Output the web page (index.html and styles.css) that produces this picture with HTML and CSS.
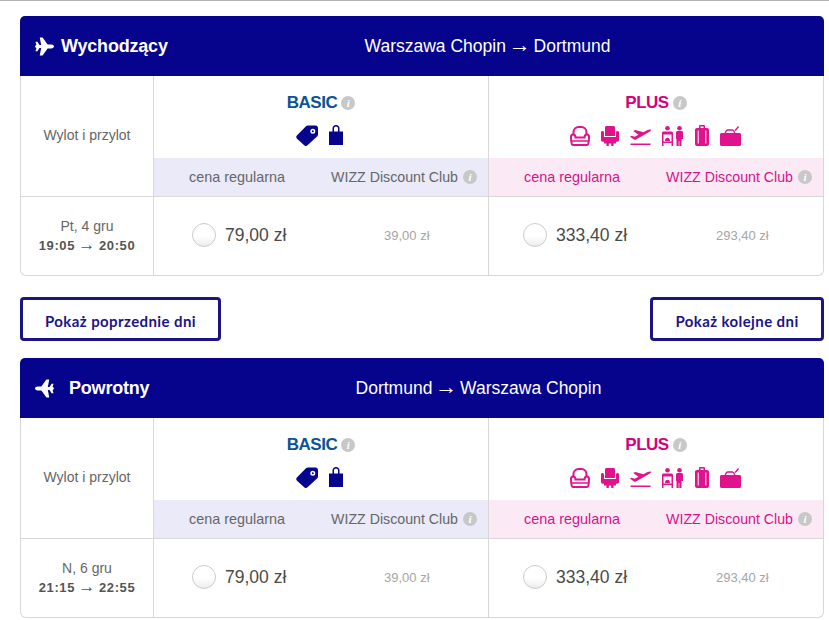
FILE: index.html
```html
<!DOCTYPE html>
<html lang="pl">
<head>
    <meta charset="UTF-8">
    <meta name="viewport" content="width=device-width, initial-scale=1.0">
    <title>Wybierz lot</title>
    <link rel="stylesheet" href="styles.css">
</head>
<body>

<svg class="sprites" width="0" height="0" aria-hidden="true">
    <symbol id="i-plane" viewBox="0 0 20 20">
        <path d="M1 8.300h5.500L5 .5h3L13.300 8h3.900c1.500 0 2.800.9 2.800 2s-1.300 2-2.800 2h-3.900L8 19.500H5l1.500-7.800H1l-1-1.700z"/>
        <path d="M.5 5h2l2.200 3.500H1.500zM.5 15h2l2.200-3.500H1.500z"/>
    </symbol>
    <symbol id="i-tag" viewBox="0 0 22 21">
        <path fill-rule="evenodd" d="M12 0.500h7.500c1.400 0 2.500 1.100 2.500 2.500v6.500c0 .7-.3 1.200-.7 1.700L11.500 20.300c-.8.900-2.100.9-3 .1L1 13.700c-1-.9-1-2.300-.1-3.200L10 1.300c.5-.5 1.200-.8 2-.8zM16.800 3.700a2.500 2.500 0 1 0 0 5 2.500 2.500 0 0 0 0-5zm0 1.500a1 1 0 1 1 0 2 1 1 0 0 1 0-2z"/>
    </symbol>
    <symbol id="i-bag" viewBox="0 0 14 20">
        <path fill-rule="evenodd" d="M3.500 6.500V3.300C3.500 1.300 5 0 7 0s3.500 1.300 3.500 3.300v3.200H14V20H0V6.500zM5 6.500h4V3.300C9 2.200 8.100 1.500 7 1.500s-2 .7-2 1.800z"/>
    </symbol>
    <symbol id="i-seat" viewBox="0 0 20 20">
        <path fill="none" stroke="currentColor" stroke-width="2" d="M3.500 8.500V6c0-3 2.500-5 5-5h3c2.500 0 5 2 5 5v2.500"/>
        <path fill="none" stroke="currentColor" stroke-width="2" d="M3 8.500c1.500 0 2.500 1 2.500 3h9c0-2 1-3 2.500-3 1.500 0 2 1.300 2 2.500 0 3-.3 5-.8 7-.2.700-.6 1-1.200 1H3c-.6 0-1-.3-1.200-1C1.300 16 1 14 1 11c0-1.200.5-2.500 2-2.500z"/>
        <path fill="none" stroke="currentColor" stroke-width="1.500" d="M2 15h16"/>
    </symbol>
    <symbol id="i-chair" viewBox="0 0 18 20">
        <path d="M4 1.500C4 .7 4.700 0 5.500 0h7c.8 0 1.500.7 1.500 1.500V10H4zM0 6.500C0 5.700.7 5 1.500 5S3 5.700 3 6.500V11h12V6.500c0-.8.700-1.500 1.500-1.500s1.500.7 1.500 1.500V14c0 1-.7 1.700-1.700 1.700H1.700C.7 15.700 0 15 0 14z"/>
        <path d="M3 15h12v2.500H12.500V20h-2.300v-2.500H7.800V20H5.500v-2.500H3z"/>
    </symbol>
    <symbol id="i-takeoff" viewBox="0 0 21 20">
        <path d="M0 10.500l1.500-.8 3.200 1 3.800-2L3.200 5l2.200-1 8 2.300L17.600 4c1.300-.6 2.800-.8 3.300-.3.400.5-.2 1.300-1.500 2L6 13.500c-.8.400-1.500.3-2.100 0z"/>
        <path d="M.5 17.500h20V19H.5z"/>
    </symbol>
    <symbol id="i-desk" viewBox="0 0 22 20">
        <circle cx="5.500" cy="2.300" r="2.300"/>
        <circle cx="17.500" cy="2.300" r="2.300"/>
        <path d="M1.500 5.500h8c.8 0 1.500.7 1.500 1.500v1.500H0V7c0-.8.7-1.500 1.500-1.500zM3 14.500c0-1.600 1-2.800 2.500-2.800S8 12.900 8 14.500v.5H3zM14 6.700c0-1 .7-1.700 1.700-1.700h3.600c1 0 1.700.7 1.700 1.700V13h-1.500v7h-2.200v-5h-.6v5h-2.200v-7H14z"/>
        <path d="M0 8h1.500v12H0zM1 15.500h10V17H1zM9.500 8H11v12H9.500z"/>
    </symbol>
    <symbol id="i-suitcase" viewBox="0 0 14 21">
        <path fill-rule="evenodd" d="M4 3V1.200C4 .5 4.500 0 5.200 0h3.600c.7 0 1.200.5 1.200 1.200V3h2c1.100 0 2 .9 2 2v14c0 1.100-.9 2-2 2H2c-1.100 0-2-.9-2-2V5c0-1.100.9-2 2-2zM5.500 3h3V1.500h-3zM2.700 5.500h1v13h-1zM10.300 5.500h1v13h-1z"/>
    </symbol>
    <symbol id="i-holdall" viewBox="0 0 21 20">
        <path d="M1.500 7h18c.8 0 1.500.7 1.500 1.500v10c0 .8-.7 1.500-1.500 1.500h-18C.7 20 0 19.300 0 18.500v-10C0 7.700.7 7 1.500 7z"/>
        <path fill="none" stroke="currentColor" stroke-width="1.300" d="M5 8.500c.5-3 1.500-4.500 3-4.500h4.500c1 0 1.500 1 2 2.500l.5 2"/>
        <path d="M14.500 4.200L18 0l1.100.9-3.500 4.200z"/>
    </symbol>
</svg>

<main class="page">
    <section class="flight">
        <header class="flight-head">
            <div class="flight-title">
                <svg class="plane-icon"><use href="#i-plane"/></svg>
                <span>Wychodzący</span>
            </div>
            <div class="flight-route">Warszawa Chopin <span class="arrow">→</span> Dortmund</div>
        </header>
        <div class="fare-grid">
            <div class="cell cell-label">Wylot i przylot</div>
            <div class="cell fare-head fare-basic">
                <div class="fare-name">BASIC <i class="info">i</i></div>
                <div class="fare-icons">
                    <svg class="ico-tag"><use href="#i-tag"/></svg>
                    <svg class="ico-bag"><use href="#i-bag"/></svg>
                </div>
                <div class="fare-prices">
                    <span class="regular">cena regularna</span>
                    <span class="club">WIZZ Discount Club <i class="info">i</i></span>
                </div>
            </div>
            <div class="cell fare-head fare-plus">
                <div class="fare-name">PLUS <i class="info">i</i></div>
                <div class="fare-icons">
                    <svg class="ico-seat"><use href="#i-seat"/></svg>
                    <svg class="ico-chair"><use href="#i-chair"/></svg>
                    <svg class="ico-takeoff"><use href="#i-takeoff"/></svg>
                    <svg class="ico-desk"><use href="#i-desk"/></svg>
                    <svg class="ico-suitcase"><use href="#i-suitcase"/></svg>
                    <svg class="ico-holdall"><use href="#i-holdall"/></svg>
                </div>
                <div class="fare-prices">
                    <span class="regular">cena regularna</span>
                    <span class="club">WIZZ Discount Club <i class="info">i</i></span>
                </div>
            </div>
            <div class="cell cell-time">
                <div>Pt, 4 gru</div>
                <strong>19:05 <span class="arrow">→</span> 20:50</strong>
            </div>
            <div class="cell cell-price cell-price-basic">
                <span class="radio"></span>
                <span class="price">79,00 zł</span>
                <span class="price-club">39,00 zł</span>
            </div>
            <div class="cell cell-price cell-price-plus">
                <span class="radio"></span>
                <span class="price">333,40 zł</span>
                <span class="price-club">293,40 zł</span>
            </div>
        </div>
    </section>

    <div class="day-nav">
        <button type="button" class="day-btn day-prev">Pokaż poprzednie dni</button>
        <button type="button" class="day-btn day-next">Pokaż kolejne dni</button>
    </div>

    <section class="flight">
        <header class="flight-head">
            <div class="flight-title">
                <svg class="plane-icon plane-back"><use href="#i-plane"/></svg>
                <span class="title-back">Powrotny</span>
            </div>
            <div class="flight-route route-back">Dortmund <span class="arrow">→</span> Warszawa Chopin</div>
        </header>
        <div class="fare-grid">
            <div class="cell cell-label">Wylot i przylot</div>
            <div class="cell fare-head fare-basic">
                <div class="fare-name">BASIC <i class="info">i</i></div>
                <div class="fare-icons">
                    <svg class="ico-tag"><use href="#i-tag"/></svg>
                    <svg class="ico-bag"><use href="#i-bag"/></svg>
                </div>
                <div class="fare-prices">
                    <span class="regular">cena regularna</span>
                    <span class="club">WIZZ Discount Club <i class="info">i</i></span>
                </div>
            </div>
            <div class="cell fare-head fare-plus">
                <div class="fare-name">PLUS <i class="info">i</i></div>
                <div class="fare-icons">
                    <svg class="ico-seat"><use href="#i-seat"/></svg>
                    <svg class="ico-chair"><use href="#i-chair"/></svg>
                    <svg class="ico-takeoff"><use href="#i-takeoff"/></svg>
                    <svg class="ico-desk"><use href="#i-desk"/></svg>
                    <svg class="ico-suitcase"><use href="#i-suitcase"/></svg>
                    <svg class="ico-holdall"><use href="#i-holdall"/></svg>
                </div>
                <div class="fare-prices">
                    <span class="regular">cena regularna</span>
                    <span class="club">WIZZ Discount Club <i class="info">i</i></span>
                </div>
            </div>
            <div class="cell cell-time">
                <div>N, 6 gru</div>
                <strong>21:15 <span class="arrow">→</span> 22:55</strong>
            </div>
            <div class="cell cell-price cell-price-basic">
                <span class="radio"></span>
                <span class="price">79,00 zł</span>
                <span class="price-club">39,00 zł</span>
            </div>
            <div class="cell cell-price cell-price-plus">
                <span class="radio"></span>
                <span class="price">333,40 zł</span>
                <span class="price-club">293,40 zł</span>
            </div>
        </div>
    </section>
</main>

</body>
</html>
```

FILE: styles.css
```css
html, body {
    height: 620px;
    overflow: hidden;
}
body {
    margin: 0;
    background-color: #fff;
    border-top: 1px solid #b4b4b4;
    font-family: "Liberation Sans", Arial, sans-serif;
    color: #666;
}
.sprites {
    position: absolute;
}
.page {
    width: 804px;
    margin-left: 20px;
    padding-top: 15px;
}
.flight-head {
    display: flex;
    align-items: center;
    height: 60px;
    background-color: #06038d;
    border-radius: 5px 5px 0 0;
    color: #fff;
}
.flight-title {
    display: flex;
    align-items: center;
    width: 134px;
    padding-left: 15px;
    box-sizing: border-box;
    font-size: 18px;
    font-weight: bold;
    letter-spacing: -.2px;
    white-space: nowrap;
}
.plane-icon {
    width: 19px;
    height: 19px;
    margin-right: 7px;
    fill: #fff;
    flex: none;
}
.plane-back {
    transform: scaleX(-1);
}
.title-back {
    margin-left: 8px;
}
.flight-route {
    flex: 1;
    text-align: center;
    font-size: 17.5px;
    padding-right: 3px;
}
.route-back {
    padding-right: 21px;
}
.arrow {
    font-weight: normal;
}
.flight-route .arrow {
    font-size: 22px;
    line-height: 20px;
    margin: 0 -2px;
}
.fare-grid {
    display: grid;
    grid-template-columns: 133px 335px 1fr;
    grid-template-rows: 121px 78px;
    border: 1px solid #d8d8d8;
    border-top: none;
    border-radius: 0 0 6px 6px;
}
.cell {
    box-sizing: border-box;
    border-right: 1px solid #d8d8d8;
}
.cell-label,
.fare-head {
    border-bottom: 1px solid #d8d8d8;
}
.cell-label {
    display: flex;
    align-items: center;
    justify-content: center;
    font-size: 14px;
    padding-bottom: 3px;
}
.fare-head {
    display: flex;
    flex-direction: column;
    align-items: center;
}
.fare-name {
    display: flex;
    align-items: center;
    height: 17px;
    margin-top: 18px;
    font-size: 17px;
    font-weight: bold;
    letter-spacing: -.5px;
}
.fare-basic .fare-name {
    color: #0b5394;
}
.fare-plus .fare-name {
    color: #d6007f;
}
.fare-plus,
.cell-price-plus {
    border-right: none;
}
.info {
    display: inline-block;
    width: 14px;
    height: 14px;
    margin-left: 4px;
    border-radius: 50%;
    background-color: #c8c8c8;
    color: #fff;
    font: italic bold 11px/14px "Liberation Serif", serif;
    letter-spacing: 0;
    text-align: center;
}
.fare-icons {
    display: flex;
    align-items: flex-end;
    height: 22px;
    margin-top: 13px;
    gap: 11px;
}
.fare-basic .fare-icons {
    color: #06038d;
    fill: #06038d;
    padding-right: 3px;
}
.fare-plus .fare-icons {
    color: #e0128c;
    fill: #e0128c;
    padding-right: 2px;
}
.ico-tag { width: 22px; height: 21px; }
.ico-bag { width: 14px; height: 20px; margin-bottom: 1px; }
.ico-seat { width: 20px; height: 20px; }
.ico-chair { width: 18px; height: 20px; }
.ico-takeoff { width: 21px; height: 20px; }
.ico-desk { width: 22px; height: 20px; }
.ico-suitcase { width: 14px; height: 21px; }
.ico-holdall { width: 21px; height: 20px; }
.fare-prices {
    display: flex;
    align-items: center;
    justify-content: space-between;
    align-self: stretch;
    height: 38px;
    margin-top: auto;
    padding: 0 11px 0 35px;
    font-size: 14.2px;
}
.fare-basic .fare-prices {
    background-color: #eaeaf9;
    color: #666;
}
.fare-plus .fare-prices {
    background-color: #fbeaf6;
    color: #d6128c;
}
.fare-prices .regular {
    margin-bottom: 1px;
    font-size: 14.4px;
}
.club {
    display: flex;
    align-items: center;
}
.club .info {
    margin-left: 5px;
}
.cell-time {
    text-align: center;
    font-size: 14px;
    line-height: 19px;
    padding-top: 20px;
}
.cell-time strong {
    display: block;
    font-size: 13px;
    letter-spacing: .6px;
    color: #555;
}
.cell-time .arrow {
    font-size: 17px;
    line-height: 15px;
    margin: 0 -1px;
}
.cell-price {
    display: flex;
    align-items: center;
    padding-bottom: 2px;
}
.radio {
    width: 22px;
    height: 22px;
    border: 1px solid #ccc;
    border-radius: 50%;
    background: linear-gradient(#fff 55%, #ececec);
    flex: none;
}
.cell-price-basic .radio {
    margin-left: 38px;
}
.cell-price-plus .radio {
    margin-left: 34px;
}
.price {
    margin-left: 9px;
    width: 159px;
    font-size: 17.5px;
    color: #4a4a4a;
    white-space: nowrap;
}
.cell-price-plus .price {
    width: 160px;
}
.price-club {
    font-size: 13px;
    color: #a5a5a5;
}
.day-nav {
    display: flex;
    justify-content: space-between;
    margin: 21px 0 17px;
}
.day-btn {
    height: 44px;
    padding: 3px 0 0;
    background-color: #fff;
    border: 3px solid #1c1484;
    border-radius: 4px;
    color: #1c1484;
    font-family: Lato, sans-serif;
    font-size: 15px;
    font-weight: bold;
    letter-spacing: .4px;
}
.day-prev {
    width: 201px;
}
.day-next {
    width: 174px;
}
```
